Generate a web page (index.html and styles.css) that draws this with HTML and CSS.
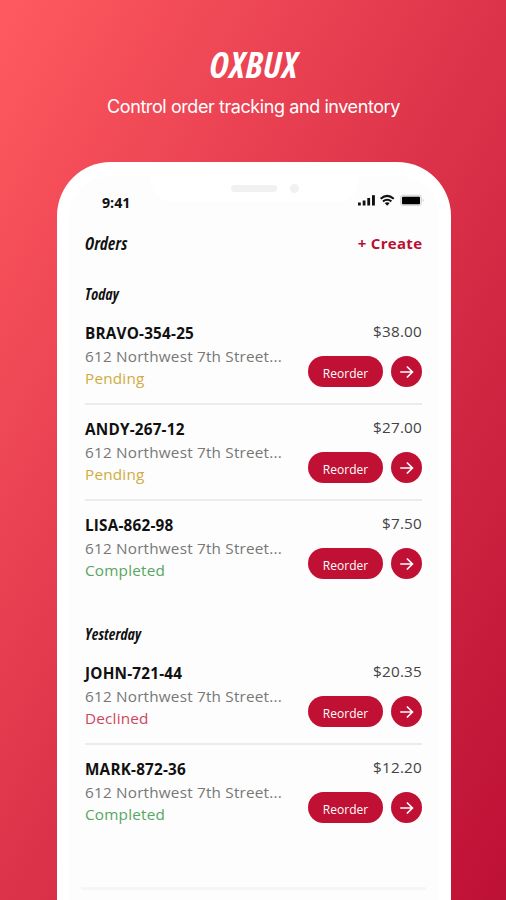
FILE: index.html
```html
<!DOCTYPE html>
<html lang="en">
<head>
<meta charset="utf-8">
<title>OXBUX</title>
<link rel="stylesheet" href="styles.css">
</head>
<body>
<svg class="defs" width="0" height="0" aria-hidden="true">
  <symbol id="arrow" viewBox="0 0 16 16"><path d="M1.2 8h12M7.9 2.5 13.4 8l-5.5 5.5" fill="none" stroke="#fff" stroke-width="1.7"/></symbol>
</svg>
<header class="hero">
  <h1 class="brand">OXBUX</h1>
  <p class="tagline">Control order tracking and inventory</p>
</header>
<main class="phone">
  <div class="screen">
    <div class="notch"><i class="speaker"></i><i class="camera"></i></div>
    <div class="status">
      <span class="time">9:41</span>
      <svg class="indicators" width="67" height="14" viewBox="0 0 67 14">
        <g fill="#111"><rect x="0" y="8.5" width="2.8" height="3"/><rect x="4.7" y="6.5" width="2.8" height="5"/><rect x="9.3" y="4" width="2.8" height="7.5"/><rect x="14" y="1.2" width="2.9" height="10.3"/></g>
        <g fill="none" stroke="#111" stroke-width="2"><path d="M22.6 4.7Q29.2-.9 35.8 4.7"/><path d="M25 7.4q4.2-3.4 8.4 0"/></g>
        <path d="M26.7 9.1q2.5-1.9 5 0l-2.5 2.7z" fill="#111"/>
        <rect x="42.6" y="1.2" width="20.8" height="10.4" rx="2.3" fill="#e8e8e8" stroke="#d0d0d0" stroke-width=".8"/>
        <rect x="44" y="2.7" width="18" height="7.5" rx="1" fill="#000"/>
        <path d="M64.8 4.6q1.5 1.8 0 3.6z" fill="#aaa"/>
      </svg>
    </div>
    <div class="topbar"><h2 class="cond title">Orders</h2><a class="create">+ Create</a></div>
    <h3 class="cond day">Today</h3>
    <section class="orders">
      <article class="order"><div class="info"><b>BRAVO-354-25</b><span class="address">612 Northwest 7th Street...</span><span class="pending">Pending</span></div><div class="side"><span class="price">$38.00</span><div class="actions"><button class="reorder">Reorder</button><button class="go"><svg><use href="#arrow"/></svg></button></div></div></article>
      <article class="order"><div class="info"><b>ANDY-267-12</b><span class="address">612 Northwest 7th Street...</span><span class="pending">Pending</span></div><div class="side"><span class="price">$27.00</span><div class="actions"><button class="reorder">Reorder</button><button class="go"><svg><use href="#arrow"/></svg></button></div></div></article>
      <article class="order"><div class="info"><b>LISA-862-98</b><span class="address">612 Northwest 7th Street...</span><span class="completed">Completed</span></div><div class="side"><span class="price">$7.50</span><div class="actions"><button class="reorder">Reorder</button><button class="go"><svg><use href="#arrow"/></svg></button></div></div></article>
    </section>
    <h3 class="cond day later">Yesterday</h3>
    <section class="orders">
      <article class="order"><div class="info"><b>JOHN-721-44</b><span class="address">612 Northwest 7th Street...</span><span class="declined">Declined</span></div><div class="side"><span class="price">$20.35</span><div class="actions"><button class="reorder">Reorder</button><button class="go"><svg><use href="#arrow"/></svg></button></div></div></article>
      <article class="order"><div class="info"><b>MARK-872-36</b><span class="address">612 Northwest 7th Street...</span><span class="completed">Completed</span></div><div class="side"><span class="price">$12.20</span><div class="actions"><button class="reorder">Reorder</button><button class="go"><svg><use href="#arrow"/></svg></button></div></div></article>
    </section>
    <div class="tabline"></div>
  </div>
</main>
</body>
</html>
```
FILE: styles.css
```css
* { box-sizing: border-box; margin: 0; padding: 0; }
body {
  width: 506px;
  height: 900px;
  overflow: hidden;
  background: linear-gradient(to bottom right, #ff5a60 0%, #dd334a 50%, #bd1035 100%);
  font-family: "Open Sans", sans-serif;
  color: #111;
}
.defs { position: absolute; }
.hero { height: 162px; padding-top: 45px; text-align: center; color: #fff; }
.brand { font-size: 36px; line-height: 40px; font-stretch: 75%; font-weight: 700; font-style: italic; letter-spacing: .5px; padding-left: 2px; }
.tagline { font-family: Inter, sans-serif; font-size: 18px; line-height: 24px; margin-top: 10px; letter-spacing: -.42px; padding-left: 1px; }
.phone {
  width: 394px;
  height: 738px;
  margin-left: 56.5px;
  padding: 14px 12px 0;
  border-radius: 54px 54px 0 0;
  background: #fff;
  overflow: hidden;
}
.screen { position: relative; height: 724px; padding: 0 16.5px; border-radius: 40px 40px 0 0; background: #fdfdfd; }
.notch {
  position: absolute; left: 82px; top: -4px;
  width: 208px; height: 30px; padding: 12px 0 0 80px;
  display: flex; gap: 13px;
  border-radius: 0 0 22px 22px; background: #fff;
}
.speaker { width: 46px; height: 7px; margin-top: 1px; border-radius: 4px; background: #f1f1f1; }
.camera { width: 9px; height: 9px; border-radius: 50%; background: #f1f1f1; }
.status { height: 50px; padding: 17px 0 0 17px; display: flex; justify-content: space-between; align-items: flex-start; }
.time { font-size: 14.2px; line-height: 20px; font-weight: 700; }
.indicators { margin: 1px -3px 0 0; }
.topbar { height: 34px; display: flex; align-items: center; justify-content: space-between; }
.cond { font-stretch: 75%; font-style: italic; font-weight: 700; }
.title { font-size: 17px; letter-spacing: .3px; }
.create { color: #b90f32; font-size: 15px; letter-spacing: .3px; margin-right: -.3px; font-weight: 700; }
.day { height: 20px; line-height: 20px; font-size: 15.5px; letter-spacing: .15px; margin: 24px 0 18px; }
.day.later { margin: 39.5px 0 18.5px; }
.order { height: 96.2px; display: flex; justify-content: space-between; border-bottom: 2px solid #ececec; }
.order + .order { padding-top: 13px; }
.order:first-child { height: 83px; }
.order:last-child { border-bottom: 0; height: 83px; }
.info { display: flex; flex-direction: column; font-size: 15.3px; letter-spacing: .2px; line-height: 22.6px; white-space: nowrap; }
.info b { font-weight: 700; }
.address { color: #777; }
.pending { color: #cfac42; }
.completed { color: #58a661; }
.declined { color: #ce4560; }
.side { display: flex; flex-direction: column; align-items: flex-end; }
.price { font-size: 15.3px; letter-spacing: .2px; line-height: 18px; color: #444; }
.actions { display: flex; gap: 8px; margin-top: 16px; }
button { border: 0; background: #c01034; color: #fff; height: 31px; }
.reorder { width: 75px; border-radius: 16px; font: 12px/31px "Open Sans", sans-serif; padding-top: 2px; }
.go { width: 31px; border-radius: 50%; display: grid; place-items: center; }
.go svg { width: 16px; height: 16px; }
.tabline { height: 3px; margin: 59px -4px 0; background: #f6f6f6; }
```
